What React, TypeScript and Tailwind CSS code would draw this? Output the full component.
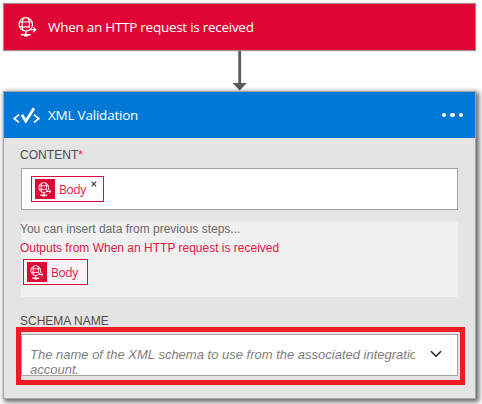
import React from "react";

function GlobeIcon({ className }: { className: string }) {
  return (
    <svg viewBox="0 0 19 20" fill="none" stroke="white" strokeWidth="1.2" className={className}>
      <circle cx="7.8" cy="7.4" r="6.7" />
      <path d="M5.2 1.2C3.9 5 3.9 10 5.2 13.6M10.4 1.2C11.8 5 11.8 8 11.3 11M1.4 5h12.8M1.4 9.8h10" />
      <path d="M7.8 14v3.4" strokeWidth="1.5" />
      <path d="M3 17.7h9.6M6 18.8h3.8" strokeWidth="1.5" />
      <path d="M11 12.7h6.5M15.3 10.4l2.4 2.3-2.4 2.3" strokeWidth="1.3" />
    </svg>
  );
}

function ValidationIcon() {
  return (
    <svg viewBox="0 0 27 17" fill="none" stroke="white" className="h-[17px] w-[27px] shrink-0">
      <path d="M6 7.7 1.3 11.6 6 15.4M21 7.7l4.7 3.9-4.7 3.8" strokeWidth="1.7" />
      <path d="M8.8 7.8l4 6.4L21 1.2" strokeWidth="2.8" />
    </svg>
  );
}

function BodyToken({ removable = false }: { removable?: boolean }) {
  return (
    <div
      className={
        removable
          ? "flex h-[26px] w-[73px] items-start border border-[#df0a38] bg-white pt-[2px] pl-[3px]"
          : "flex h-[26px] w-[65px] items-start border border-[#df0a38] bg-[#f5f5f5] pt-[2px] pl-[3px]"
      }
    >
      <span className="flex size-5 shrink-0 items-center justify-center bg-[#df0635]">
        <GlobeIcon className="h-[15px] w-[14px]" />
      </span>
      <span className="ml-[4px] w-[28px] pt-[2px] font-['Open_Sans',sans-serif] text-[12px] leading-[18px] tracking-[-0.35px] text-[#df1745]">
        Body
      </span>
      {removable && (
        <svg viewBox="0 0 6 6" className="mt-[2px] ml-[4px] size-[6px]" stroke="#333" strokeWidth="1.1">
          <path d="M.6.6l4.6 4.8M5.2.6.6 5.4" />
        </svg>
      )}
    </div>
  );
}

export default function App() {
  return (
    <main className="flex h-[404px] w-[482px] flex-col overflow-hidden bg-white pt-[3px] pl-[3px] font-['Liberation_Sans',Arial,sans-serif] text-[12px]">
      <section className="flex h-[48px] w-[473px] shrink-0 items-center border border-[#a88c95] bg-[#df0635] pl-[14px] text-white shadow-[0_0_1px_#999]">
        <GlobeIcon className="h-5 w-[19px]" />
        <h1 className="ml-[11px] font-['Open_Sans',sans-serif] text-[13.5px] tracking-[-0.27px] whitespace-nowrap">
          When an HTTP request is received
        </h1>
      </section>

      <svg viewBox="0 0 16 40" className="ml-[229px] h-10 w-4 shrink-0" fill="#5b5b5b">
        <path d="M6.3 0h2.8v32h5.6L7.7 39.5.5 32h5.8z" />
      </svg>

      <section className="flex h-[308px] w-[473px] shrink-0 flex-col border border-[#a6a6a6] bg-[#e4e4e4] shadow-[2px_2px_5px_1px_rgba(0,0,0,0.62)]">
        <header className="flex h-[46px] shrink-0 items-center bg-[#0078d7] pr-[12px] pl-[9px] text-white">
          <ValidationIcon />
          <h2 className="ml-[8px] font-['Open_Sans',sans-serif] text-[13.5px] tracking-[-0.22px]">XML Validation</h2>
          <span className="ml-auto flex gap-[4px]">
            <i className="size-[4.5px] rounded-full bg-white" />
            <i className="size-[4.5px] rounded-full bg-white" />
            <i className="size-[4.5px] rounded-full bg-white" />
          </span>
        </header>
        <div className="flex flex-col pl-[17px]">
          <label className="mt-[9px] -ml-px h-[21px] leading-[16px] tracking-[0.05px] text-[#4d4d4d]">
            CONTENT<span className="text-[#ff2020]">*</span>
          </label>
          <div className="h-[42px] w-[437px] border border-[#a5a5a5] bg-white pt-[7px] pl-[9px]">
            <BodyToken removable />
          </div>
          <div className="mt-[12px] flex h-[75px] w-[437px] flex-col bg-[#f0f0f0]">
            <p className="-ml-px h-[18px] leading-[14px] text-[#696969]">
              You can insert data from previous steps...
            </p>
            <p className="-ml-px mb-[3px] h-4 pt-px leading-[14px] text-[#df1745]">
              Outputs from When an HTTP request is received
            </p>
            <div className="ml-[2px]">
              <BodyToken />
            </div>
          </div>
          <label className="mt-[16px] -ml-px h-[14px] leading-[16px] text-[#4d4d4d]">SCHEMA NAME</label>
          <div className="-ml-[5px] flex h-[58px] w-[449px] border-[5px] border-[#ee1c24] pt-[2px]">
            <div className="flex h-[42px] w-[437px] border border-[#a5a5a5] bg-white pl-[8px]">
              <p className="mt-[12px] h-[30px] w-[385px] shrink-0 overflow-hidden text-[13px] leading-[15px] whitespace-nowrap text-[#7d7d7d] italic">
                The name of the XML schema to use from the associated integration
                <br />
                account.
              </p>
              <svg viewBox="0 0 12 8" className="mt-[15px] ml-[15px] h-2 w-3" fill="none" stroke="#222" strokeWidth="1.6">
                <path d="M1 1.2l5 5 5-5" />
              </svg>
            </div>
          </div>
        </div>
      </section>
    </main>
  );
}
